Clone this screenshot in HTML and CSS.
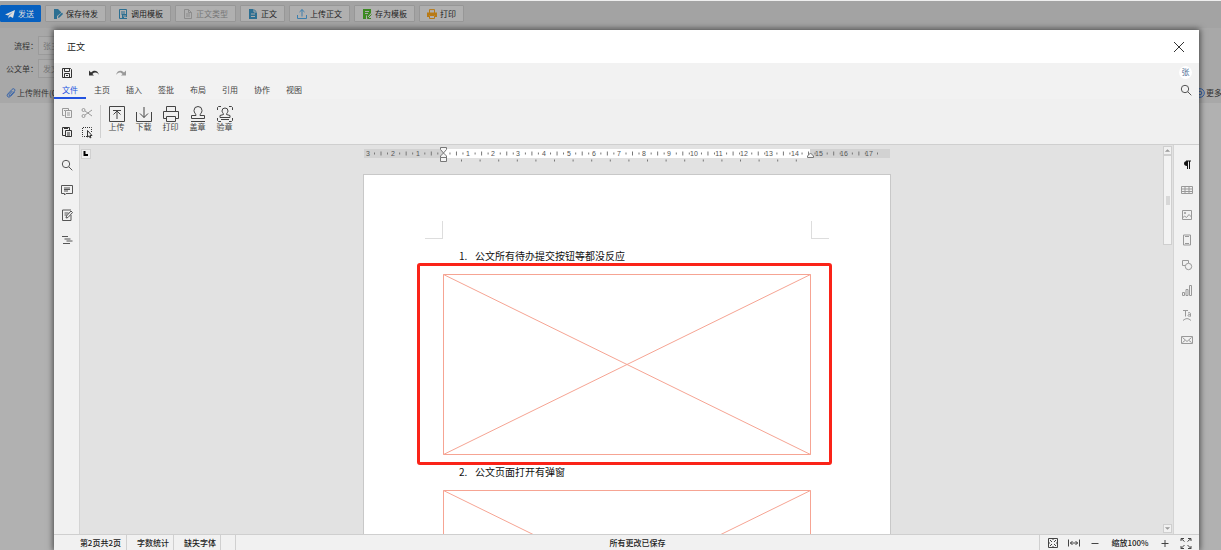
FILE: index.html
```html
<!DOCTYPE html>
<html lang="zh-CN">
<head>
<meta charset="utf-8">
<title>正文</title>
<link rel="stylesheet" href="styles.css">
</head>
<body>
<svg class="defs" width="0" height="0" aria-hidden="true">
  <symbol id="search" viewBox="0 0 12 12"><circle cx="5" cy="5" r="3.7"/><path d="M7.8 7.8 11.3 11.3"/></symbol>
  <symbol id="doc" viewBox="0 0 10 10"><path class="fill" d="M1 0h5l3 3v7H1z"/><path stroke="#aaa" d="M3 5h4M3 7.5h4M6 0v3h3"/></symbol>
</svg>

<div class="back">
  <div class="actions">
    <button class="act send"><svg class="ic white" viewBox="0 0 10 10"><path class="fill" d="M0 5.5 10 1 8 9 5 7.500 3.500 9.500V7L8 3 3 6.500z"/></svg>发送</button>
    <button class="act"><svg class="ic teal" viewBox="0 0 10 10"><path class="fill" d="M1 0h4l3 3v1L4 7v3H1z"/><path class="fill" d="m5 9 .4-2L9 3.500 10 5 6.500 8.600z"/></svg>保存待发</button>
    <button class="act"><svg class="ic teal" viewBox="0 0 10 10"><path d="M1.500.5h7v9h-7zM3 3h4M3 5h4"/><path class="fill" d="M4 5h5v5H4z"/><path stroke="#aaa" d="M5 7h3M6 8.500h3"/></svg>调用模板</button>
    <button class="act" disabled><svg class="ic gray" viewBox="0 0 10 10"><path d="M1.500.5h4l3 3v6h-7zM5.500.5v3h3M3 5h4M3 7h4"/></svg>正文类型</button>
    <button class="act"><svg class="ic teal"><use href="#doc"/></svg>正文</button>
    <button class="act"><svg class="ic blue" viewBox="0 0 10 10"><path d="M.5 6v3.500h9V6M5 7.500v-7M2.500 3 5 .6 7.500 3"/></svg>上传正文</button>
    <button class="act"><svg class="ic green" viewBox="0 0 10 10"><path class="fill" d="M1 0h8v4L6 7.500 4 6v4H1z"/><path stroke="#aaa" d="M3 2.500h4M3 4.500h3"/><path d="m5.500 9.500 4-4M5.500 7v2.500H9"/></svg>存为模板</button>
    <button class="act"><svg class="ic orange" viewBox="0 0 10 10"><path d="M2.500 4V.6h5V4"/><path class="fill" d="M0 3.500h10V8H8V6H2v2H0z"/><path d="M2.500 6.500h5v3h-5z"/></svg>打印</button>
  </div>
  <div class="form">
    <div class="row"><label for="flow">流程：</label><input id="flow" value="张三"></div>
    <div class="row"><label for="doc-form">公文单：</label><input id="doc-form" value="发文单"></div>
    <div class="row last">
      <a href="#" class="attach"><svg class="ic navy" viewBox="0 0 10 10"><path d="m8.500 4-4 4.300C2.500 10.300 0 8 1.800 6l4.400-4.700c1.600-1.500 3.600.4 2.200 2L4.500 7.400C3.500 8.300 2.400 7.200 3.300 6.300l3-3.200"/></svg>上传附件(0)</a>
      <a href="#" class="more"><svg class="ic navy" viewBox="0 0 10 10"><circle cx="5" cy="5" r="4.300"/><circle cx="5" cy="5" r="1.800"/></svg>更多</a>
    </div>
  </div>
</div>

<section class="modal" role="dialog" aria-label="正文">
  <header class="modal-head">
    <h1>正文</h1>
    <button class="close" aria-label="关闭"><svg viewBox="0 0 12 12"><path d="m1 1 10 10M11 1 1 11"/></svg></button>
  </header>

  <div class="quick">
    <button aria-label="保存"><svg class="dark" viewBox="0 0 12 12"><path d="M1.500 1.500h8l1 1v8h-9zM3.500 1.500v3h5v-3M3.500 10.500v-4h5v4M5 8.500h2"/></svg></button>
    <button aria-label="撤销"><svg class="dark" viewBox="0 0 12 12"><path class="fill" d="M1 3.500v5h5L4.400 7C6.500 5 9 5 11 8 10 3.500 6 2.500 3 5.500z"/></svg></button>
    <button aria-label="重做"><svg class="soft" viewBox="0 0 12 12"><path class="fill" d="M11 3.500v5H6L7.600 7C5.500 4.500 3 5 1 8 2 3.500 6 2.500 9 5.500z"/></svg></button>
    <span class="avatar">张</span>
  </div>

  <nav class="tabs">
    <button class="on">文件</button><button>主页</button><button>插入</button><button>签批</button><button>布局</button><button>引用</button><button>协作</button><button>视图</button>
    <button class="find" aria-label="搜索"><svg class="mid"><use href="#search"/></svg></button>
  </nav>

  <div class="ribbon">
    <div class="clip">
      <button aria-label="复制"><svg class="soft" viewBox="0 0 12 12"><path d="M3.500 8.500h-2v-7h6v2M4.500 3.500h6v7h-6zM6 6h3M6 8h3M3 3.500h1"/></svg></button>
      <button aria-label="剪切"><svg class="soft" viewBox="0 0 12 12"><circle cx="2.500" cy="3" r="1.500"/><circle cx="2.500" cy="9" r="1.500"/><path d="m4 4 7 5M4 8l7-5"/></svg></button>
      <button aria-label="粘贴"><svg class="dark" viewBox="0 0 12 12"><path d="M4 9.500H1.500v-8h7V4M4.500 4.500h6v6h-6zM6 7h3M6 9h3"/><path stroke-width="2" d="M3 2h4"/></svg></button>
      <button aria-label="选择"><svg class="dark" viewBox="0 0 12 12"><path stroke-dasharray="1 1" d="M6 10.500H1.500v-9h9V6"/><path d="m6.500 4.500 4.500 5H9l1 2-1 .4-1-2-1.500 1.200z"/></svg></button>
    </div>
    <button class="big"><svg viewBox="0 0 16 16"><path d="M.5.5h15v15H.5zM4 4.500h8M8 13V5M4.500 8.500 8 5l3.500 3.500"/></svg>上传</button>
    <button class="big"><svg viewBox="0 0 16 16"><path d="M.5 6v9.500h15V6M8 1v10.500M4 7.500l4 4 4-4"/></svg>下载</button>
    <button class="big"><svg viewBox="0 0 16 16"><path d="M3.500 5V.5h9V5M3 12.500H.5v-7h15v7H13M3.500 10.500h9v5h-9z"/></svg>打印</button>
    <button class="big"><svg viewBox="0 0 16 16"><path d="M6 9.500c0-2-2-2.500-2-5a4 4 0 0 1 8 0c0 2.500-2 3-2 5h4.500v3h-13v-3zM1 15.500h14"/></svg>盖章</button>
    <button class="big"><svg viewBox="0 0 16 16"><path d="M.5 4V1.500l1-1H4M12 .5h2.500l1 1V4M.5 12v2.500l1 1H4M12 15.500h2.500l1-1V12M6.500 8.500c0-1.500-1.500-2-1.500-3.500a3 3 0 0 1 6 0c0 1.500-1.500 2-1.500 3.500l3.500 1v2H3v-2zM4 13.500h8"/></svg>验章</button>
  </div>

  <div class="work">
    <aside class="rail left">
      <button aria-label="查找"><svg><use href="#search"/></svg></button>
      <button aria-label="批注"><svg viewBox="0 0 12 12"><path d="M.5 1.500h11v8H5L3.500 11V9.500h-3zM3 4h6M3 5.500h6M3 7h4"/></svg></button>
      <button aria-label="修订"><svg viewBox="0 0 12 12"><path d="M10 6v5.500H1.500V1H10M3.500 4h4M3.500 6H6"/><path d="m5 9 .5-2L10 2l1.500 1.500L7 8.500z"/></svg></button>
      <button aria-label="目录"><svg viewBox="0 0 12 12"><path d="M1 2.500h6M3.500 5h6M5.500 7h6M2 9.500h7"/></svg></button>
    </aside>

    <main class="canvas">
      <button class="corner" aria-label="制表位"><svg viewBox="0 0 10 10"><path d="M3.500 2v4H7"/></svg></button>
      <div class="column">
        <svg class="ruler" viewBox="0 0 528 14">
          <path class="fill dim" d="M1 1h526v9H1z"/>
          <path class="fill paper" d="M80 1h367v9H80z"/>
          <path class="tick" stroke-width="4" stroke-dasharray="1 24.150" d="M17.500 5.500H520"/>
          <path class="tick" stroke-width="2" stroke-dasharray="1 24.150" d="M11 5.500H520M24 5.500H520"/>
          <path class="tick" stroke-width="2" stroke-dasharray="1 17.600" d="M98 12.500h352"/>
          <g class="nums">
            <text x="5" y="8">3</text><text x="30" y="8">2</text><text x="55" y="8">1</text>
            <text x="105" y="8">1</text><text x="130" y="8">2</text><text x="155" y="8">3</text><text x="181" y="8">4</text><text x="206" y="8">5</text><text x="231" y="8">6</text><text x="256" y="8">7</text><text x="281" y="8">8</text><text x="306" y="8">9</text><text x="331" y="8">10</text><text x="356" y="8">11</text><text x="381" y="8">12</text><text x="406" y="8">13</text><text x="432" y="8">14</text><text x="456" y="8">15</text><text x="481" y="8">16</text><text x="506" y="8">17</text>
          </g>
          <path class="knob" d="M77.500-.5h6v2l-3 3.500-3-3.500zM77.500 9.500V8l3-3 3 3v5.500h-6zM77.500 9.500h6M444.500 9.500V8l3-3 3 3v1.500z"/>
        </svg>
        <article class="page">
          <div class="marks"><i></i><i></i></div>
          <p><span class="num">1.</span>公文所有待办提交按钮等都没反应</p>
          <div class="figure">
            <svg viewBox="0 0 368 181" preserveAspectRatio="none"><path d="M.5.5h367v180H.5zM.5.5l367 180M367.500.5.5 180.500"/></svg>
            <span class="highlight"></span>
          </div>
          <p><span class="num">2.</span>公文页面打开有弹窗</p>
          <div class="figure">
            <svg viewBox="0 0 368 181" preserveAspectRatio="none"><path d="M.5.5h367v180H.5zM.5.5l367 180M367.500.5.5 180.500"/></svg>
          </div>
        </article>
      </div>
      <div class="scroll">
        <button aria-label="向上"><svg viewBox="0 0 8 8"><path class="fill" d="M1 5.500h6L4 2.500z"/></svg></button>
        <div class="thumb"><i></i></div>
        <button class="down" aria-label="向下"><svg viewBox="0 0 8 8"><path class="fill" d="M1 2.500h6L4 5.500z"/></svg></button>
      </div>
    </main>

    <aside class="rail right">
      <button aria-label="段落"><svg class="black" viewBox="0 0 12 12"><path class="fill" d="M6 2C2 2 2 7 6 7z"/><path d="M6.500 2v8M8.500 2v8M5 2h5"/></svg></button>
      <button aria-label="表格"><svg viewBox="0 0 12 12"><path d="M.5 2.500h11v7H.5zM.5 5h11M.5 7.500h11M4 2.500v7M8 2.500v7"/></svg></button>
      <button aria-label="图片"><svg viewBox="0 0 12 12"><path d="M1.500 1.500h9v9h-9zM1.500 9l2-2 2 1.500 2.500-3L10.500 8"/><circle cx="4" cy="4" r=".7"/></svg></button>
      <button aria-label="页眉页脚"><svg viewBox="0 0 12 12"><path d="M2.500 1h7v10h-7zM4 2.500h4M4 9.500h4"/></svg></button>
      <button aria-label="形状"><svg viewBox="0 0 12 12"><path d="M4 6.500H1.500v-5h6V4"/><circle cx="7.500" cy="7.500" r="3.200"/></svg></button>
      <button aria-label="图表"><svg viewBox="0 0 12 12"><path d="M1.500 8.500h2v3h-2zM5 5.500h2v6H5zM8.500 1.500h2v10h-2z"/></svg></button>
      <button aria-label="艺术字"><svg viewBox="0 0 12 12"><path d="M2 1.500h5M4.500 1.500v6M7 4c2-1 2.500 0 2.500 1v2.500M9.500 5.500C6 5 6 8 9.500 7M2 11.500c3-2.500 5-2.500 8 0"/></svg></button>
      <button aria-label="邮件"><svg viewBox="0 0 12 12"><path d="M.5 2.500h11v7H.5zM1.500 3.500 6 7.500l4.500-4M1.500 8.500l2.500-2M10.500 8.500 8 6.500"/></svg></button>
    </aside>
  </div>

  <footer class="status">
    <span class="cell pages">第2页共2页</span><button class="cell">字数统计</button><button class="cell">缺失字体</button><span class="cell blank"></span>
    <span class="cell saved">所有更改已保存</span>
    <div class="zoom">
      <button aria-label="适合页面"><svg viewBox="0 0 12 12"><path d="M1.500 1.500h9v9h-9zM3 3l2 2M9 3 7 5M3 9l2-2M9 9 7 7M6 1v2M6 9v2M1 6h2M9 6h2"/></svg></button>
      <button aria-label="适合宽度"><svg viewBox="0 0 12 12"><path d="M.5 2.500v7M11.500 2.500v7M2 6h8M4.500 4l-2 2 2 2M7.500 4l2 2-2 2"/></svg></button>
      <button aria-label="缩小"><svg viewBox="0 0 12 12"><path d="M2.500 6.500h7"/></svg></button>
      <span class="level">缩放100%</span>
      <button aria-label="放大"><svg viewBox="0 0 12 12"><path d="M2.500 6.500h7M6 3v7"/></svg></button>
      <button aria-label="全屏"><svg viewBox="0 0 12 12"><path d="M1 4V1.500h3M1 1.500l3.500 3M8 1.500h3V4M11 1.500l-3.500 3M1 9v2.500h3M1 11.500 4.500 8M8 11.500h3V9M11 11.500 7.500 8"/></svg></button>
    </div>
  </footer>
</section>
</body>
</html>
```
FILE: styles.css
```css
* { box-sizing: border-box; }
html, body { height: 100%; }
body {
  margin: 0;
  overflow: hidden;
  position: relative;
  background: #b1b1b1;
  color: #333;
  font: 8px/12px "Noto Sans CJK SC", "Noto Sans", sans-serif;
}
button, input { font: inherit; color: inherit; margin: 0; padding: 0; border: 0; background: none; }
button { display: flex; align-items: center; justify-content: center; white-space: nowrap; }
a { color: inherit; text-decoration: none; }
svg { display: block; flex: none; width: 12px; height: 12px; fill: none; stroke: currentColor; overflow: visible; }
.defs { position: absolute; width: 0; height: 0; }
.fill { fill: currentColor; stroke: none; }

/* dimmed form behind the dialog */
.actions { display: flex; gap: 4px; padding: 4px 0 6px; border-top: 1px solid #eee; background: #a3a3a3; }
.act { height: 17px; padding: 0 7px; gap: 3px; border: 1px solid #979797; border-radius: 1px; background: #b0b0b0; color: #222; }
.act:disabled { color: #777; }
.act.send { padding: 0 6px 0 4px; background: #0660c0; border-color: #0660c0; color: #ddd; }
.ic { width: 10px; height: 10px; }
.white { color: #ddd; } .teal { color: #2c6f92; } .gray { color: #8d8d8d; } .blue { color: #3c7fae; }
.green { color: #3c8a22; } .orange { color: #b87a16; } .navy { color: #2f5fa8; }
.form { padding: 6px 0 0; background: #a8a8a8; }
.row { display: flex; align-items: center; height: 23px; }
.row label { width: 38px; padding-left: 2px; text-align: right; }
.row input { width: 240px; height: 19px; padding-left: 4px; border: 1px solid #9b9b9b; background: #ababab; color: #777; }
.row.last { justify-content: space-between; padding: 2px 0 0 6px; }
.attach, .more { display: flex; align-items: center; gap: 1px; white-space: nowrap; }
.more { width: 26px; }

/* dialog */
.modal {
  position: absolute;
  inset: 30px 22px 0 54px;
  display: flex;
  flex-direction: column;
  background: #f2f2f2;
  box-shadow: 0 0 6px 1px rgba(0, 0, 0, .6);
}
.modal-head { display: flex; align-items: center; justify-content: space-between; height: 33px; padding: 0 13px; background: #fff; }
.modal-head h1 { margin: 0; font-size: 9px; font-weight: 400; color: #222; }
.close { width: 14px; height: 14px; }
.dark { color: #333; } .soft { color: #999; } .mid { color: #555; } .black { color: #111; }
.quick { display: flex; align-items: center; gap: 15px; height: 19px; padding: 0 7px; }
.quick svg { width: 12px; height: 12px; }
.avatar { width: 13px; height: 13px; margin-left: auto; border-radius: 50%; background: #fff; color: #4a6c94; text-align: center; }
.tabs { display: flex; height: 17px; }
.tabs button { width: 32px; border-bottom: 2px solid transparent; color: #444; }
.tabs .on { color: #2353e0; border-color: #2353e0; }
.tabs .find { width: 26px; margin-left: auto; }
.ribbon { display: flex; height: 46px; padding: 6px 7px; background: #f0f0f0; border-bottom: 1px solid #cfcfcf; }
.clip { display: grid; grid-template-columns: 12px 12px; gap: 7px 8px; align-content: start; padding: 2px 7px 0 0; margin-right: 2px; border-right: 1px solid #d0d0d0; }
.big { flex-direction: column; justify-content: flex-start; width: 27px; color: #444; line-height: 9px; padding-top: 1px; }
.big svg { width: 16px; height: 16px; }

.work { display: flex; flex: 1; min-height: 0; }
.rail { display: flex; flex-direction: column; gap: 1px; width: 26px; padding-top: 8px; background: #f1f1f1; color: #555; }
.rail button { height: 24px; }
.rail.left { border-right: 1px solid #d4d4d4; }
.rail.right { border-left: 1px solid #d4d4d4; color: #999; }
.canvas { display: grid; grid-template-columns: 12px 1fr 11px; flex: 1; min-width: 0; background: #e2e2e2; overflow: hidden; }
.corner { width: 10px; height: 10px; margin: 4px 0 0 1px; background: #efefef; border: 1px solid #d0d0d0; color: #000; }
.corner svg { width: 10px; height: 10px; stroke-width: 2; }
.column { display: flex; flex-direction: column; align-items: center; min-width: 0; overflow: hidden; padding-top: 3px; }
.ruler { width: 528px; height: 14px; color: #777; }
.ruler .dim { fill: #d2d2d2; }
.ruler .paper { fill: #fff; }
.ruler .knob { fill: #f5f5f5; stroke: #777; }
.nums { font: 7px "Liberation Sans", sans-serif; fill: #555; stroke: none; text-anchor: middle; }
.page { width: 528px; margin-top: 12px; padding: 46px 61px 80px; border: 1px solid #c8c8c8; background: #fff; }
.marks { display: flex; justify-content: space-between; }
.marks i { width: 18px; height: 18px; border: 0 solid #ddd; border-width: 0 1px 1px 0; }
.marks i + i { border-width: 0 0 1px 1px; }
.page p { display: flex; margin: 0; padding: 1px 0 2px 34px; font-size: 10px; line-height: 32px; color: #111; }
.num { width: 16px; }
.figure { position: relative; margin: 0 18px; color: #f6a493; }
.figure svg { width: 100%; height: 181px; }
.highlight { position: absolute; inset: -11px -21px -10px -26px; border: 3px solid #fa2318; border-radius: 3px; }
.scroll { display: flex; flex-direction: column; padding: 1px; color: #999; }
.scroll button { height: 9px; border: 1px solid #cfcfcf; background: #f1f1f1; }
.scroll button svg { width: 7px; height: 7px; }
.thumb { display: flex; align-items: center; justify-content: center; height: 90px; border: 1px solid #cfcfcf; background: #f3f3f3; }
.thumb i { width: 4px; height: 9px; background: #d8d8d8; }
.scroll .down { margin-top: auto; }

.status { display: flex; height: 16px; border-top: 1px solid #cfcfcf; color: #222; font-weight: 500; background: #f1f1f1; line-height: 15px; }
.cell { width: 47px; padding-left: 6px; border-right: 1px solid #d0d0d0; text-align: center; white-space: nowrap; }
.cell.pages { width: 73px; padding: 0 5px 0 0; text-align: right; }
.cell.blank { width: 15px; padding: 0; }
.cell.saved { flex: 1; padding: 0; }
.zoom { display: flex; align-items: center; gap: 9px; padding: 0 7px; color: #444; }
.level { width: 40px; color: #222; text-align: center; }
```
